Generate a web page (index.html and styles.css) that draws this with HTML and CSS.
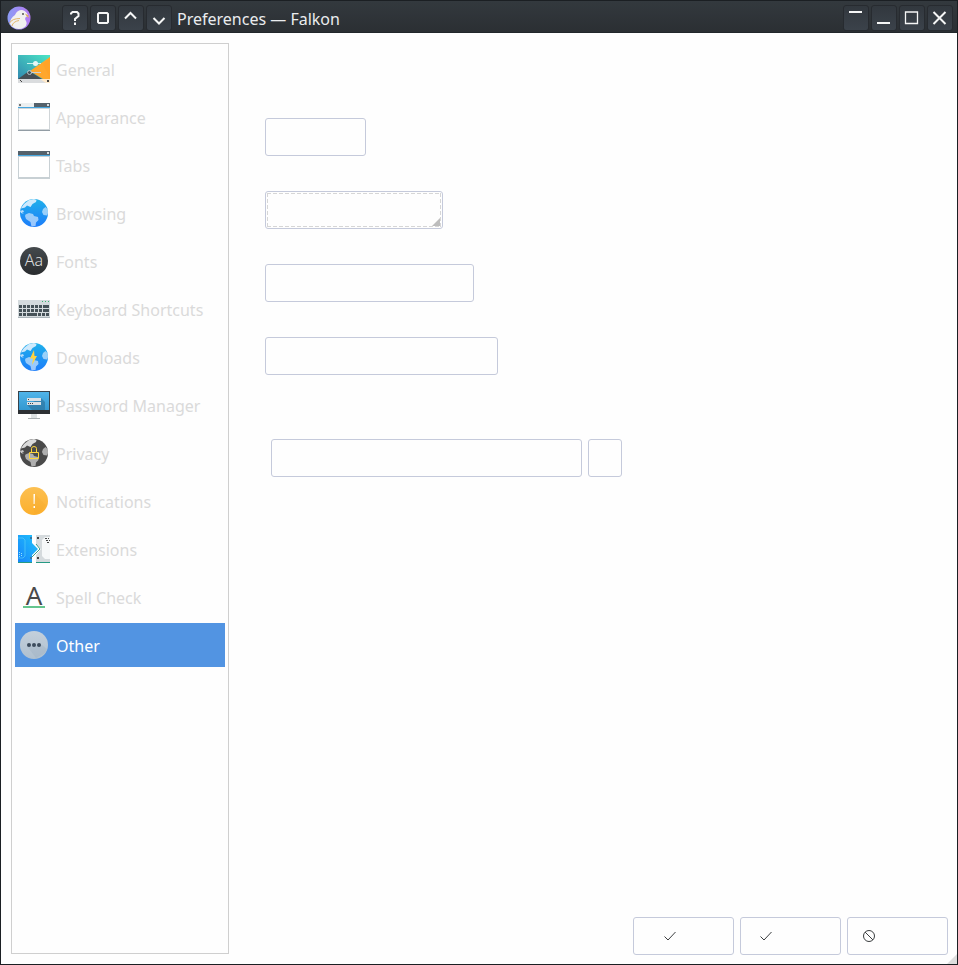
FILE: index.html
```html
<!DOCTYPE html>
<html lang="en">
<head>
<meta charset="utf-8">
<title>Preferences — Falkon</title>
<link rel="stylesheet" href="styles.css">
</head>
<body>
<svg class="defs" width="0" height="0" aria-hidden="true">
  <defs>
    <linearGradient id="sea" x1="0" y1="0" x2="0" y2="1"><stop offset="0" stop-color="#1fb0ea"/><stop offset="1" stop-color="#1d7dfa"/></linearGradient>
    <linearGradient id="dark" x1="0" y1="0" x2="0" y2="1"><stop offset="0" stop-color="#454a4d"/><stop offset="1" stop-color="#292c2f"/></linearGradient>
    <linearGradient id="teal" x1="0" y1="1" x2="1" y2="0"><stop offset="0" stop-color="#3289b0"/><stop offset="1" stop-color="#4be6c5"/></linearGradient>
    <linearGradient id="amber" x1="0" y1="0" x2="0" y2="1"><stop offset="0" stop-color="#fcc052"/><stop offset="1" stop-color="#fcaf2c"/></linearGradient>
    <linearGradient id="screen" x1="0" y1="0" x2="0" y2="1"><stop offset="0" stop-color="#50b4e9"/><stop offset="1" stop-color="#3498d0"/></linearGradient>
    <linearGradient id="piece" x1="0" y1="1" x2="1" y2="0"><stop offset="0" stop-color="#1784fa"/><stop offset="1" stop-color="#20c4fb"/></linearGradient>
    <linearGradient id="steel" x1="0" y1="0" x2="0" y2="1"><stop offset="0" stop-color="#c4d0db"/><stop offset="1" stop-color="#afc0cf"/></linearGradient>
    <linearGradient id="violet" x1="0" y1="0" x2="1" y2="0"><stop offset="0" stop-color="#8b9cf5"/><stop offset="1" stop-color="#b67af2"/></linearGradient>
    <g id="land">
      <path d="M3.500 10.500 L6 7 L11 3 L16 2 L18.500 3 L18 5 L14.500 7 L12.500 10 L9 8.500 L7 10.500 L3 11.500Z" fill-opacity=".85"/>
      <path d="M2 14 L5 13 L6 15 L4 15.500 L6 17 L3 16Z" fill-opacity=".75"/>
      <path d="M7.500 17.500 L11 16 L15 17 L16 19 L20 20 L20.500 23 L18 25.500 L17.500 29 L13.500 29.500 L12.500 25 L8 22 L7 19Z" fill-opacity=".6"/>
      <path d="M29.500 12 L27.500 10 L25 12 L24 15 L25.500 18 L29 18.500 L30 16Z" fill-opacity=".6"/>
    </g>
  </defs>
</svg>
<div class="window">
  <header class="titlebar">
    <svg class="logo" viewBox="0 0 24 24" aria-hidden="true">
      <circle cx="12" cy="12" r="11.500" fill="url(#violet)"/>
      <path d="M3 18 Q3 12 8 9 Q10 4 15 4 Q20 5 21.500 11 L19.500 10.500 Q17 12 19 15 Q21 19 17 21.500 Q11 25 5 20.500Z" fill="#f1f0ef"/>
      <path d="M2.500 17 Q5 12.500 13 12.500 M5 20 Q6 15.500 12 14.500" fill="none" stroke="#e2b66d"/>
      <path d="M18 7.500 L21.500 9.500 L21.500 12 L19.500 10Z" fill="#d9a956"/>
      <circle cx="16" cy="8" r=".9" fill="#444"/>
    </svg>
    <div class="title-tools">
      <button class="tool" aria-label="Help"><svg viewBox="0 0 16 16"><path d="M4 4.500V3.500L5.500 2H10L11.500 3.500V6L8 9V11M8 12.500V15" stroke-width="2"/></svg></button>
      <button class="tool" aria-label="All desktops"><svg viewBox="0 0 16 16"><path d="M4 3H12L13 4V12L12 13H4L3 12V4Z" stroke-width="2"/></svg></button>
      <button class="tool" aria-label="Keep above"><svg viewBox="0 0 16 16"><path d="M2 8.500L7.500 3L13 8.500" stroke-width="2"/></svg></button>
      <button class="tool" aria-label="Keep below"><svg viewBox="0 0 16 16"><path d="M2.500 8L8 13.500L13.500 8" stroke-width="2"/></svg></button>
    </div>
    <h1 class="title">Preferences — Falkon</h1>
    <div class="title-tools">
      <button class="tool" aria-label="Shade"><svg viewBox="0 0 16 16"><path d="M1 2H14" stroke-width="2"/></svg></button>
      <button class="tool" aria-label="Minimize"><svg viewBox="0 0 16 16"><path d="M1 13H14" stroke-width="2"/></svg></button>
      <button class="tool" aria-label="Maximize"><svg viewBox="0 0 16 16"><path d="M1.500 2H13.500V13.500H1.500Z" stroke-width="1.300"/></svg></button>
      <button class="tool" aria-label="Close"><svg viewBox="0 0 16 16"><path d="M1.500 2L13.500 14M13.500 2L1.500 14" stroke-width="2"/></svg></button>
    </div>
  </header>
  <div class="content">
    <nav class="sidebar">
      <a class="item" href="#general"><svg class="icon" viewBox="0 0 32 32">
        <path d="M0 2H32V26H0Z" fill="url(#teal)"/><path d="M0 26L11 18L24 26Z" fill="#474f55"/><path d="M32 4V26H25L12 18Z" fill="#ffa72d"/><path d="M25 11L32 4V26Z" fill="#ff9f24" opacity=".5"/>
        <path d="M0 26H32V30H0Z" fill="#dadcde"/><path d="M22 26H32V30H28Z" fill="#ffeacb"/><path d="M2 27H3V28H2ZM3 28H4V29H3ZM29 27H31V29H29Z" fill="#444"/>
        <path d="M9 10.500H23" stroke="#c7f2ed"/><circle cx="17.500" cy="10.500" r="2.500" fill="#e7f7f4"/><path d="M13 19.500H23" stroke="#ccd0d2"/><circle cx="11.500" cy="19.500" r="2" fill="none" stroke="#b6c2c8"/>
      </svg>General</a>
      <a class="item" href="#appearance"><svg class="icon" viewBox="0 0 32 32" shape-rendering="crispEdges">
        <path d="M0 2H32V6H0Z" fill="#54616b"/><path d="M0 2H16V6H0Z" fill="#eceff0"/><path d="M1 3H3V5H1Z" fill="#777"/><path d="M29 3H31V5H29Z" fill="#d8dcdf"/><path d="M0 6H32V7H0Z" fill="#46a5dd"/><path d="M0 7H32V29H0Z" fill="#d0d5d8"/><path d="M1 8H31V28H1Z" fill="#fff"/><path d="M0 29H32V30H0Z" fill="#929ca4"/>
      </svg>Appearance</a>
      <a class="item" href="#tabs"><svg class="icon" viewBox="0 0 32 32" shape-rendering="crispEdges">
        <path d="M0 2H32V6H0Z" fill="#54616b"/><path d="M29 3H31V5H29Z" fill="#d8dcdf"/><path d="M0 6H32V7H0Z" fill="#46a5dd"/><path d="M0 7H32V30H0Z" fill="#c8d0d4"/><path d="M1 8H31V28H1Z" fill="#fff"/>
      </svg>Tabs</a>
      <a class="item" href="#browsing"><svg class="icon" viewBox="0 0 32 32"><circle cx="16" cy="16" r="14" fill="url(#sea)"/><use href="#land" fill="#edf5ff"/></svg>Browsing</a>
      <a class="item" href="#fonts"><svg class="icon" viewBox="0 0 32 32"><circle cx="16" cy="16" r="14" fill="url(#dark)"/><text class="glyph-aa" x="16" y="21" text-anchor="middle">Aa</text></svg>Fonts</a>
      <a class="item" href="#shortcuts"><svg class="icon" viewBox="0 0 32 32">
        <path d="M0 7H32V25H0Z" fill="#d4dadd"/><path d="M0 24H32V25H0Z" fill="#aab4b9"/><path d="M24 8.500H31" stroke="#39b36f" stroke-dasharray="1 2"/>
        <path d="M1 13.500H25M1 17.500H25M1 21.500H9M20 21.500H31" stroke="#465258" stroke-width="3" stroke-dasharray="3 1"/><path d="M25 13.500H31M25 17.500H31M9 21.500H19" stroke="#465258" stroke-width="3"/>
      </svg>Keyboard Shortcuts</a>
      <a class="item" href="#downloads"><svg class="icon" viewBox="0 0 32 32"><circle cx="16" cy="16" r="14" fill="url(#sea)"/><use href="#land" fill="#edf5ff"/><path d="M16 9L12 17.500H15L14 24L19 15H16.500Z" fill="#ffd33f"/></svg>Downloads</a>
      <a class="item" href="#passwords"><svg class="icon" viewBox="0 0 32 32">
        <path d="M0 2H32V25H0Z" fill="#37434c"/><path d="M1 3H31V21H1Z" fill="url(#screen)"/><path d="M9 16L14 21H27V13L23 9Z" fill="#2d719b" opacity=".65"/><path d="M0 21H32V25H0Z" fill="#2d3033"/>
        <path d="M9 9H23V12H9ZM9 13H23V16H9Z" fill="#dbe0e5"/><path d="M10 10.500H11M10 14.500H11M12 14.500H13M14 14.500H15" stroke="#444"/><path d="M13 25H19V29H13Z" fill="#dde1e2"/><path d="M10 29H22V30H10Z" fill="#aab0b2"/>
      </svg>Password Manager</a>
      <a class="item" href="#privacy"><svg class="icon" viewBox="0 0 32 32"><circle cx="16" cy="16" r="14" fill="#4a4a4a"/><use href="#land" fill="#f4f4f4"/><path d="M11.500 15.500H20.500V21.500H11.500ZM13.500 15V11.500Q13.500 9.500 16 9.500T18.500 11.500V15" fill="none" stroke="#ffd43b"/></svg>Privacy</a>
      <a class="item" href="#notifications"><svg class="icon" viewBox="0 0 32 32"><circle cx="16" cy="16" r="14" fill="url(#amber)"/><path d="M17 9L27.500 20Q24 27 17 29L15 22Z" fill="#ef9f28" opacity=".18"/><path d="M15.500 9H17L16.600 19H15.600ZM15.500 21H17V23H15.500Z" fill="#fff"/></svg>Notifications</a>
      <a class="item" href="#extensions"><svg class="icon" viewBox="0 0 32 32">
        <path d="M0 2H14V10L20 16L14 22V30H0Z" fill="url(#piece)"/><path d="M0 5H5L7 7V23L5 25H0" fill="none" stroke="#56cff7" stroke-width=".7"/><path d="M1.500 19V24M3.500 20V24" stroke="#91e3fb" stroke-dasharray="1 1"/><path d="M12 4H14V6H12ZM12 24H14V26H12Z" fill="#3977a4"/>
        <path d="M18 2H32V30H18V22L23 16L18 11Z" fill="#d5dadd"/><path d="M32 4H27L24 7V23L27 26H32Z" fill="#f6f8f9"/><path d="M18 11L22 16L14 24" fill="none" stroke="#3a9b87"/><path d="M19 4H21V6H19ZM19 24H21V26H19Z" fill="#444"/><path d="M27 5.500H31M28 7.500H32M29 9.500H31" stroke="#444" stroke-dasharray="2 1"/><path d="M0 29.500H14M18 29.500H32" stroke="#269a84"/>
      </svg>Extensions</a>
      <a class="item" href="#spelling"><svg class="icon" viewBox="0 0 32 32"><text class="glyph-a" x="16" y="24" text-anchor="middle">A</text><path d="M5 26H27" stroke="#64c58d" stroke-width="2"/></svg>Spell Check</a>
      <a class="item selected" href="#other" aria-current="page"><svg class="icon" viewBox="0 0 32 32"><circle cx="16" cy="16" r="14" fill="url(#steel)"/><path d="M9 17L18 29L27 24L29 20L24 16Z" fill="#8da1b2" opacity=".2"/><g fill="#3c4c5d"><circle cx="11" cy="16" r="2"/><circle cx="16" cy="16" r="2"/><circle cx="21" cy="16" r="2"/></g></svg>Other</a>
    </nav>
    <main class="pane">
      <div class="options">
        <button class="control change" aria-label="Change"></button>
        <button class="control agents" aria-label="User agent"><svg class="corner" viewBox="0 0 8 8"><path d="M8 0V8H0Z" fill="#bdbdbd"/></svg></button>
        <button class="control certificates" aria-label="Certificates"></button>
        <button class="control notifications" aria-label="Preview"></button>
      </div>
      <div class="path-row">
        <input class="control path" type="text" aria-label="Path">
        <button class="control browse" aria-label="Browse"></button>
      </div>
      <footer class="actions">
        <button class="control action centered" aria-label="OK"><svg viewBox="0 0 16 16"><path d="M2.500 8.500L6 12L13.500 4"/></svg></button>
        <button class="control action" aria-label="Apply"><svg viewBox="0 0 16 16"><path d="M2.500 8.500L6 12L13.500 4"/></svg></button>
        <button class="control action cancel" aria-label="Cancel"><svg viewBox="0 0 16 16"><circle cx="8" cy="8" r="5.500"/><path d="M4 4L12 12"/></svg></button>
      </footer>
    </main>
  </div>
  <svg class="grip" viewBox="0 0 10 10" aria-hidden="true"><path d="M10 0V10H0Z" fill="#dedede"/></svg>
</div>
</body>
</html>
```
FILE: styles.css
```css
* {
  box-sizing: border-box;
}

body {
  margin: 0;
  font: 16px/22px "Noto Sans", sans-serif;
}

button,
input {
  padding: 0;
  font: inherit;
}

.defs {
  position: absolute;
}

.window {
  position: relative;
  display: flex;
  flex-direction: column;
  min-height: 100vh;
  border: 1px solid #1b1f23;
  background: #fefefe;
}

.titlebar {
  display: flex;
  align-items: center;
  height: 32px;
  padding: 2px 4px 0 6px;
  border-bottom: 1px solid #22272b;
  background: linear-gradient(#33393e, #2b2f33);
}

.logo {
  width: 24px;
  height: 24px;
  margin-right: 31px;
}

.title-tools {
  display: flex;
  gap: 2px;
}

.tool {
  display: flex;
  align-items: center;
  justify-content: center;
  width: 26px;
  height: 26px;
  border: 1px solid #272b30;
  border-radius: 3px;
  background: linear-gradient(#32383e, #3b424a);
}

.tool svg {
  flex: none;
  width: 16px;
  height: 16px;
  fill: none;
  stroke: #f5f6f6;
}

.title {
  flex: 1;
  margin: 0;
  padding: 2px 0 0 5px;
  color: #eaecee;
  font-size: 16px;
  font-weight: 400;
}

.content {
  display: flex;
  flex: 1;
  padding: 10px 9px 9px 10px;
}

.sidebar {
  display: flex;
  flex: none;
  flex-direction: column;
  gap: 4px;
  width: 218px;
  margin-bottom: 1px;
  padding: 3px;
  border: 1px solid #cfcfcf;
}

.item {
  display: flex;
  align-items: center;
  gap: 6px;
  height: 44px;
  padding: 2px 3px 0;
  color: #dadada;
  text-decoration: none;
}

.selected {
  background: #5294e2;
  color: #fff;
}

.icon {
  flex: none;
  width: 32px;
  height: 32px;
  margin-bottom: 2px;
  overflow: visible;
}

.glyph-aa {
  fill: #dcddde;
  font-size: 16px;
  font-weight: 300;
}

.glyph-a {
  fill: #4a4a4a;
  font-size: 26px;
}

.pane {
  display: flex;
  flex: 1;
  flex-direction: column;
  padding: 75px 0 0 36px;
}

.options {
  display: flex;
  flex-direction: column;
  align-items: flex-start;
  gap: 35px;
}

.control {
  height: 38px;
  border: 1px solid #c5cadb;
  border-radius: 3px;
  background: #fefefe;
}

.change {
  width: 101px;
}

.agents {
  position: relative;
  width: 178px;
  padding: 1px;
}

.agents::before {
  --dash-x: repeating-linear-gradient(90deg, #d6d6d6 0 4px, transparent 4px 6px);
  --dash-y: repeating-linear-gradient(#d6d6d6 0 4px, transparent 4px 6px);
  content: "";
  display: block;
  height: 100%;
  background:
    var(--dash-x) top / 100% 1px no-repeat,
    var(--dash-x) bottom / 100% 1px no-repeat,
    var(--dash-y) left / 1px 100% no-repeat,
    var(--dash-y) right / 1px 100% no-repeat;
}

.corner {
  position: absolute;
  right: 2px;
  bottom: 2px;
  width: 8px;
  height: 8px;
}

.certificates {
  width: 209px;
}

.notifications {
  width: 233px;
}

.path-row {
  display: flex;
  gap: 6px;
  margin: 64px 0 0 6px;
}

.path {
  width: 311px;
  padding: 0 8px;
}

.browse {
  width: 34px;
}

.actions {
  display: flex;
  justify-content: flex-end;
  gap: 6px;
  margin-top: auto;
}

.action {
  display: flex;
  align-items: center;
  width: 101px;
  padding-left: 17px;
}

.centered {
  padding-left: 28px;
}

.cancel {
  padding-left: 13px;
}

.action svg {
  width: 16px;
  height: 16px;
  fill: none;
  stroke: #3b3e40;
}

.grip {
  position: absolute;
  right: 0;
  bottom: 0;
  width: 10px;
  height: 10px;
}
```
